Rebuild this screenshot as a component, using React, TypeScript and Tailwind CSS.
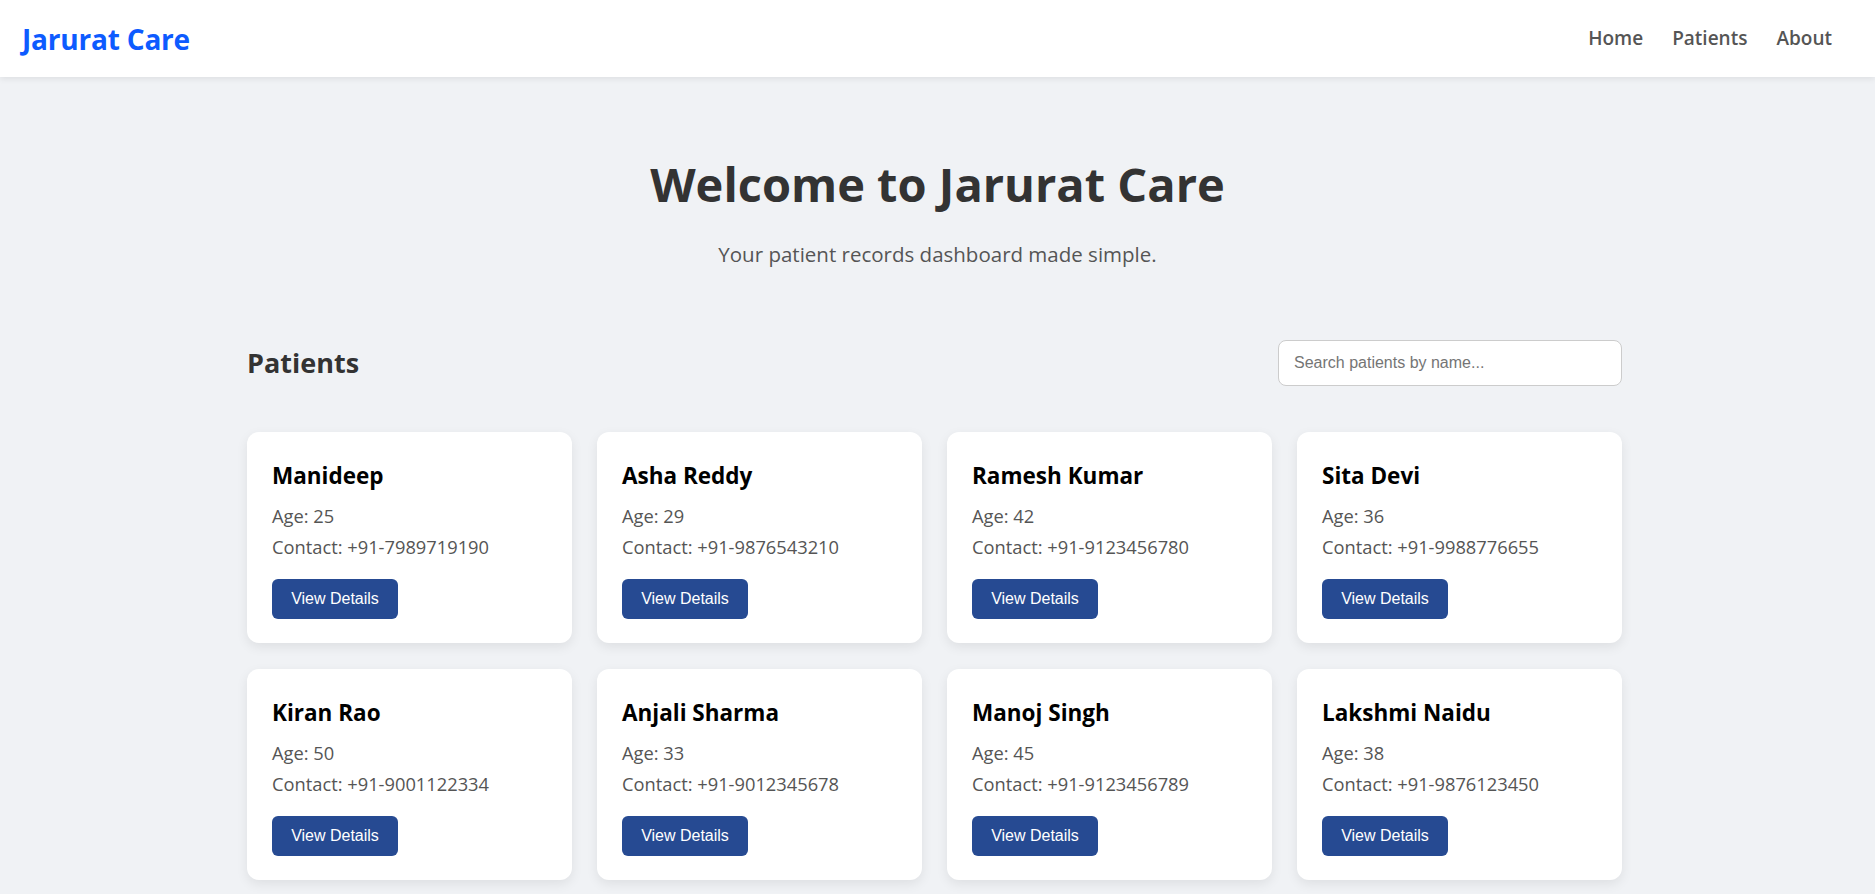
const patients = [
  { name: 'Manideep', age: 25, contact: '+91-7989719190' },
  { name: 'Asha Reddy', age: 29, contact: '+91-9876543210' },
  { name: 'Ramesh Kumar', age: 42, contact: '+91-9123456780' },
  { name: 'Sita Devi', age: 36, contact: '+91-9988776655' },
  { name: 'Kiran Rao', age: 50, contact: '+91-9001122334' },
  { name: 'Anjali Sharma', age: 33, contact: '+91-9012345678' },
  { name: 'Manoj Singh', age: 45, contact: '+91-9123456789' },
  { name: 'Lakshmi Naidu', age: 38, contact: '+91-9876123450' },
];

export default function App() {
  return (
    <div className="min-h-screen bg-[#f0f2f5] font-['Open_Sans',sans-serif]">
      <header className="h-[77px] bg-white shadow-[0_2px_6px_rgba(0,0,0,0.08)] flex items-center justify-between pl-[22px] pr-[43px]">
        <span className="text-[28px] font-bold text-[#0d5bff] tracking-[-0.2px]">Jarurat Care</span>
        <nav className="flex gap-[29px] text-[19px] font-semibold text-[#555]">
          <a href="#">Home</a>
          <a href="#">Patients</a>
          <a href="#">About</a>
        </nav>
      </header>

      <section className="text-center pt-[74px]">
        <h1 className="text-[47px] leading-[66px] font-bold text-[#333]">Welcome to Jarurat Care</h1>
        <p className="mt-[22px] text-[20.5px] text-[#555]">Your patient records dashboard made simple.</p>
      </section>

      <main className="w-[1375px] ml-[247px] mt-[70px]">
        <div className="flex items-center justify-between">
          <h2 className="text-[27px] font-bold text-[#333]">Patients</h2>
          <input
            type="text"
            placeholder="Search patients by name..."
            className="w-[344px] h-[46px] bg-white border border-[#ccc] rounded-lg px-[15px] text-[16px] font-['Liberation_Sans',sans-serif] placeholder:text-[#757575] outline-none"
          />
        </div>

        <div className="grid grid-cols-4 gap-x-[25px] gap-y-[26px] mt-[46px] pb-[24px]">
          {patients.map(p => (
            <div key={p.name} className="bg-white rounded-xl shadow-[0_4px_12px_rgba(0,0,0,0.08)] px-[25px] pt-[29px] pb-[22px] h-[211px]">
              <h3 className="text-[22.5px] font-bold text-black leading-[30px]">{p.name}</h3>
              <p className="mt-[14px] text-[18.3px] text-[#555] leading-[22px]">Age: {p.age}</p>
              <p className="mt-[9px] text-[18.3px] text-[#555] leading-[22px]">Contact: {p.contact}</p>
              <button className="mt-[21px] h-[40px] w-[126px] bg-[#264a92] text-white rounded-md text-[16px] font-['Liberation_Sans',sans-serif]">
                View Details
              </button>
            </div>
          ))}
        </div>
      </main>
    </div>
  );
}
